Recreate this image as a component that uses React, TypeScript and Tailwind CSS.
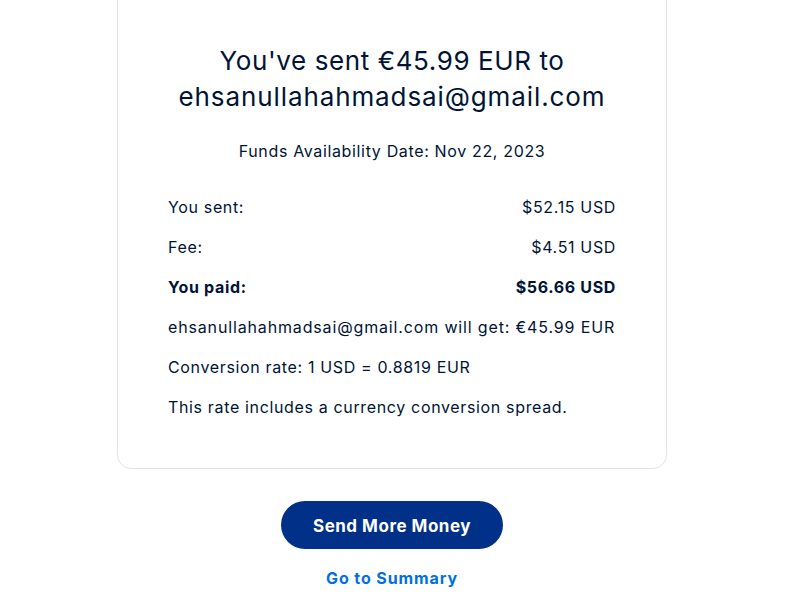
const rows = [
  { label: "You sent:", value: "$52.15 USD" },
  { label: "Fee:", value: "$4.51 USD" },
  { label: "You paid:", value: "$56.66 USD", bold: true },
];

export default function App() {
  return (
    <div
      className="min-h-[599px] bg-white text-[#001435] overflow-hidden"
      style={{ fontFamily: "Inter, 'Liberation Sans', sans-serif" }}
    >
      <div className="w-[550px] ml-[117px]">
        <div className="-mt-[20px] border border-[#e3e3e3] rounded-[14px] px-[50px] pt-[62px] pb-[41px]">
          <h1 className="text-center text-[26px] leading-[36px] font-normal tracking-[0.6px]">
            You've sent €45.99 EUR to
            <br />
            <span className="tracking-[0.9px]">ehsanullahahmadsai@gmail.com</span>
          </h1>
          <p className="text-center text-[16px] leading-[20px] mt-[26px] tracking-[0.65px]">
            Funds Availability Date: Nov 22, 2023
          </p>

          {/* Payment details */}
          <div className="mt-[26px] text-[16px] leading-[20px] tracking-[0.65px]">
            {rows.map((r) => (
              <div
                key={r.label}
                className={`flex justify-between py-[10px] ${r.bold ? "font-bold" : ""}`}
              >
                <span>{r.label}</span>
                <span>{r.value}</span>
              </div>
            ))}
            <div className="py-[10px] tracking-[0.85px]">
              ehsanullahahmadsai@gmail.com will get: €45.99 EUR
            </div>
            <div className="py-[10px]">Conversion rate: 1 USD = 0.8819 EUR</div>
            <div className="py-[10px]">
              This rate includes a currency conversion spread.
            </div>
          </div>
        </div>

        {/* Actions */}
        <div className="flex flex-col items-center mt-[32px]">
          <button className="w-[222px] h-[48px] pt-[3px] rounded-full bg-[#003087] text-white text-[17px] font-bold tracking-[0.5px]">
            Send More Money
          </button>
          <a href="#" className="mt-[17px] text-[#0070e0] text-[16px] font-bold tracking-[0.9px]">
            Go to Summary
          </a>
        </div>
      </div>
    </div>
  );
}
